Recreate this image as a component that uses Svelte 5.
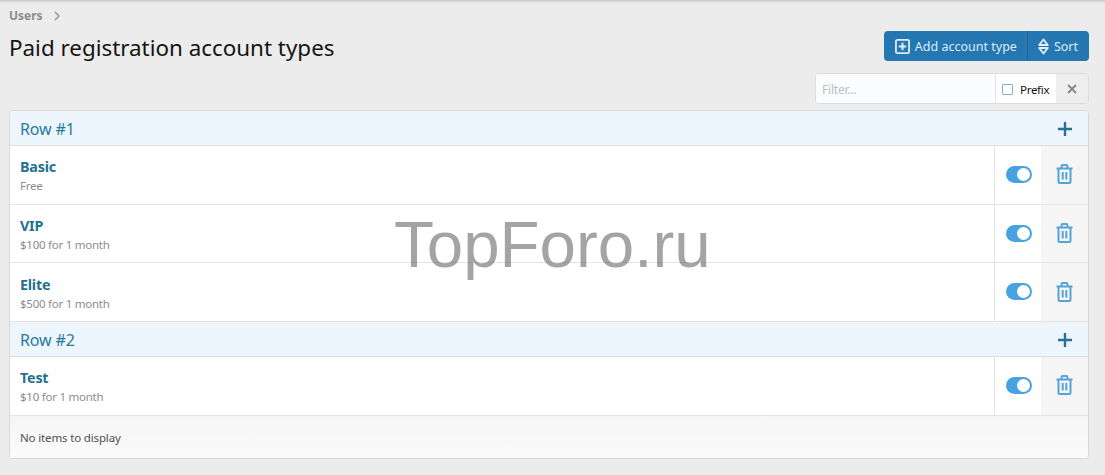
<script>
  const groups = [
    {
      title: "Row #1",
      items: [
        { name: "Basic", price: "Free" },
        { name: "VIP", price: "$100 for 1 month" },
        { name: "Elite", price: "$500 for 1 month" }
      ]
    },
    {
      title: "Row #2",
      items: [{ name: "Test", price: "$10 for 1 month" }]
    }
  ];
</script>

<div class="page">
  <div class="crumbs">
    <span>Users</span>
    <svg width="8" height="10" viewBox="0 0 8 10"><path d="M2 1l4 4-4 4" fill="none" stroke="#8c8c8c" stroke-width="1.2" /></svg>
  </div>

  <div class="head">
    <h1>Paid registration account types</h1>
    <div class="buttons">
      <button class="btn">
        <svg width="15" height="15" viewBox="0 0 16 16"><rect x="1" y="1" width="14" height="14" rx="1.500" fill="none" stroke="currentColor" stroke-width="1.900" /><path d="M8 4v8M4 8h8" stroke="currentColor" stroke-width="2.200" /></svg>
        Add account type
      </button>
      <button class="btn sort">
        <svg width="11" height="17" viewBox="0 0 11 17"><path d="M5.500 1.500L9.800 7H1.200zM5.500 15.500L1.200 10h8.600z" fill="none" stroke="currentColor" stroke-width="1.900" stroke-linejoin="round" /></svg>
        Sort
      </button>
    </div>
  </div>

  <div class="filter-row">
    <div class="filter">
      <input type="text" placeholder="Filter..." />
      <label class="prefix"><span class="box"></span>Prefix</label>
      <button class="clear" aria-label="Clear">
        <svg width="10" height="10" viewBox="0 0 10 10"><path d="M1 1l8 8M9 1L1 9" stroke="#8a8a8a" stroke-width="2" /></svg>
      </button>
    </div>
  </div>

  <div class="block">
    {#each groups as group}
      <div class="group-head">
        <span>{group.title}</span>
        <svg width="14" height="14" viewBox="0 0 14 14"><path d="M7 0v14M0 7h14" stroke="#2a6f96" stroke-width="2.400" /></svg>
      </div>
      {#each group.items as item}
        <div class="row">
          <div class="main">
            <div class="name">{item.name}</div>
            <div class="price">{item.price}</div>
          </div>
          <div class="toggle-cell"><span class="toggle"><span class="knob"></span></span></div>
          <div class="del-cell">
            <svg width="17" height="20" viewBox="0 0 17 20" fill="none" stroke="#55a2d6" stroke-width="2">
              <path d="M.5 4.500h16M2.500 4.500v13A1.500 1.500 0 0 0 4 19h9a1.500 1.500 0 0 0 1.500-1.500v-13M5.500 4.500V2.200A1.200 1.200 0 0 1 6.700 1h3.600a1.200 1.200 0 0 1 1.200 1.200v2.300M6.700 8v7.500M10.300 8v7.500" />
            </svg>
          </div>
        </div>
      {/each}
    {/each}
    <div class="footer">No items to display</div>
  </div>

  <div class="mark">TopForo.ru</div>
</div>

<style>
  :global(body) {
    background: #ececec;
  }

  .page {
    position: relative;
    height: 475px;
    padding: 0 16px 0 9px;
    box-sizing: border-box;
    font-family: "Noto Sans", "Open Sans", sans-serif;
    color: #141414;
    overflow: hidden;
    box-shadow: inset 0 3px 3px -2px rgba(0, 0, 0, 0.2);
  }

  .crumbs {
    display: flex;
    align-items: center;
    gap: 10px;
    height: 15px;
    padding-top: 8px;
    font-size: 12px;
    font-weight: 700;
    color: #8c8c8c;
  }

  .head {
    display: flex;
    justify-content: space-between;
    align-items: flex-start;
    margin-top: 8px;
    height: 42px;
  }

  h1 {
    margin: 0;
    font-size: 22.400px;
    font-weight: 400;
    line-height: 34px;
  }

  .buttons {
    display: flex;
    height: 30px;
    background: #2577b1;
    border-radius: 4px;
  }

  .btn {
    display: flex;
    align-items: center;
    gap: 5px;
    padding: 1px 10px 0 11px;
    border: 0;
    background: none;
    color: #dcedf8;
    font: inherit;
    font-size: 12.500px;
  }

  .sort {
    padding: 1px 11px 0 10px;
    border-left: 1px solid #1f6797;
  }

  .filter-row {
    display: flex;
    justify-content: flex-end;
    height: 37px;
  }

  .filter {
    display: flex;
    width: 274px;
    height: 31px;
    box-sizing: border-box;
    border: 1px solid #dcdcdc;
    border-radius: 4px;
    background: #f7f7f7;
    overflow: hidden;
  }

  input {
    flex: 1;
    min-width: 0;
    border: 0;
    padding: 1px 6px 0;
    background: #fbfcfd;
    font: inherit;
    font-size: 12px;
    letter-spacing: -0.2px;
  }

  input::placeholder {
    color: #bdbdbd;
  }

  .prefix {
    display: flex;
    align-items: center;
    gap: 7px;
    width: 61px;
    padding: 1px 0 0 6px;
    box-sizing: border-box;
    border-left: 1px solid #e4e4e4;
    background: #fff;
    font-size: 11.500px;
    letter-spacing: -0.3px;
  }

  .box {
    width: 9px;
    height: 9px;
    border: 1px solid #7fb3c4;
    border-radius: 1px;
  }

  .clear {
    width: 32px;
    display: flex;
    align-items: center;
    justify-content: center;
    border: 0;
    background: #eeeeee;
    padding: 0;
  }

  .block {
    border: 1px solid #d8d8d8;
    border-radius: 4px;
    background: #fff;
    overflow: hidden;
  }

  .group-head {
    display: flex;
    align-items: center;
    justify-content: space-between;
    height: 35px;
    padding: 1px 16px 0 10px;
    box-sizing: border-box;
    background: #edf6fd;
    border-bottom: 1px solid #dfdfdf;
    font-size: 16px;
    color: #2a7a9c;
    letter-spacing: -0.15px;
  }

  .row {
    display: flex;
    height: 57.700px;
    border-bottom: 1px solid #e4e4e4;
    background: #fff;
  }

  .main {
    flex: 1;
    padding: 11.300px 10px 0;
  }

  .name {
    font-size: 14.300px;
    font-weight: 700;
    line-height: 19px;
    color: #24708f;
    letter-spacing: -0.2px;
  }

  .price {
    margin-top: 1px;
    font-size: 11.500px;
    line-height: 18px;
    color: #8c8c8c;
    letter-spacing: -0.25px;
  }

  .toggle-cell {
    display: flex;
    align-items: center;
    justify-content: center;
    width: 47px;
    padding: 0 0 1px 2px;
    box-sizing: border-box;
    border-left: 1px solid #e4e4e4;
  }

  .toggle {
    display: flex;
    align-items: center;
    justify-content: flex-end;
    width: 26px;
    height: 17px;
    padding-right: 2px;
    box-sizing: border-box;
    border-radius: 9px;
    background: #47a3e0;
  }

  .knob {
    width: 13px;
    height: 13px;
    border-radius: 50%;
    background: #fff;
  }

  .del-cell {
    display: flex;
    align-items: center;
    justify-content: center;
    width: 47px;
    padding-bottom: 1px;
    box-sizing: border-box;
    background: #f5f5f5;
  }

  .footer {
    display: flex;
    align-items: center;
    height: 42px;
    padding: 1px 10px 0;
    box-sizing: border-box;
    background: linear-gradient(#f5f5f5, #fbfbfb);
    font-size: 11.500px;
    color: #505050;
    letter-spacing: -0.15px;
  }

  .mark {
    position: absolute;
    left: 394px;
    top: 209px;
    font-family: "Liberation Sans", Arial, sans-serif;
    font-size: 65.500px;
    line-height: 72px;
    color: rgba(90, 90, 90, 0.55);
    pointer-events: none;
  }
</style>
